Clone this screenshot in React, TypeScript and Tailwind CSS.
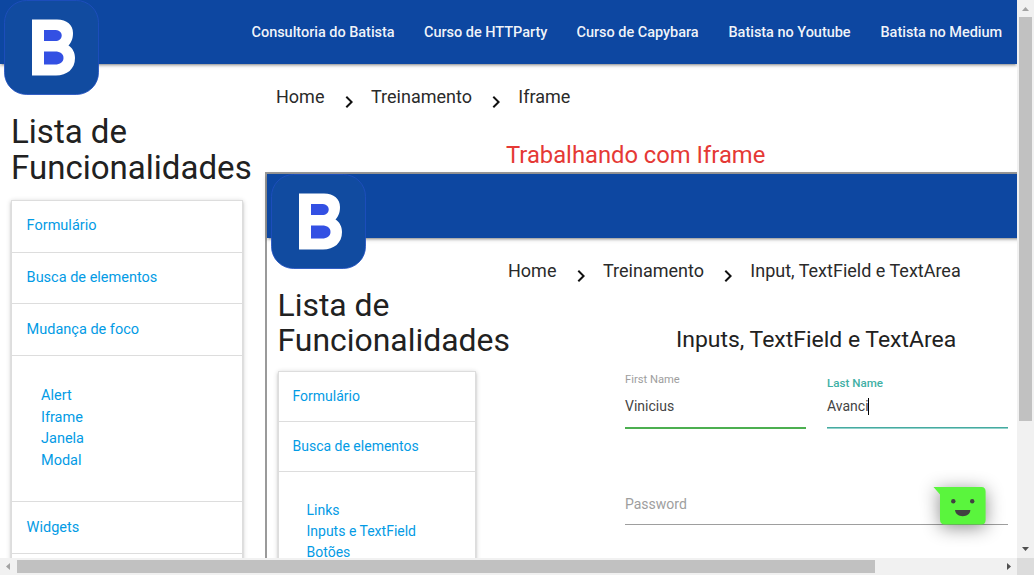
import type { ReactNode } from "react";

function Logo() {
  return (
    <svg className="relative z-10 ml-1 block shrink-0" width="96" height="96" viewBox="0 0 96 96">
      <rect x="0.5" y="0.5" width="94" height="94" rx="22" fill="#114ba0" stroke="#214fc2" strokeWidth="0.8" />
      <path
        d="M28 19.5H53C63 19.5 69 25 69 33C69 39 67 43 64.5 45.5C68.5 48 71 52.500 71 58C71 69 63 75.500 52 75.500H28Z"
        fill="#fff"
      />
      <path d="M40 30H50C55 30 57.700 32 57.700 35.500C57.700 39 55 41 51 41H40Z" fill="#3350e3" />
      <path d="M40 51.500H51C56.500 51.500 59.500 54 59.500 58C59.500 62 56 64.500 51 64.500H40Z" fill="#3350e3" />
    </svg>
  );
}

function Chevron() {
  return (
    <svg className="block shrink-0" width="24" height="24" viewBox="0 0 24 24" fill="#111">
      <path d="M10 6L8.590 7.410 13.170 12l-4.580 4.590L10 18l6-6z" />
    </svg>
  );
}

function Crumbs({ last }: { last: string }) {
  return (
    <nav className="flex h-6 text-[18px] leading-6 whitespace-nowrap text-[#2a2a2a]">
      <span className="w-[60.500px]">Home</span>
      <span className="w-[34.500px] pt-[5px]"><Chevron /></span>
      <span className="w-[112.500px]">Treinamento</span>
      <span className="w-[34.800px] pt-[5px]"><Chevron /></span>
      <span>{last}</span>
    </nav>
  );
}

function Header({ children }: { children?: ReactNode }) {
  return (
    <header className="relative z-10 flex h-16 shrink-0 items-start justify-between bg-[#0d47a1] shadow-[0_2px_2px_0_rgba(0,0,0,0.14),0_3px_1px_-2px_rgba(0,0,0,0.12),0_1px_5px_0_rgba(0,0,0,0.2)]">
      <Logo />
      {children}
    </header>
  );
}

const card =
  "overflow-hidden border border-[#ddd] bg-white text-[#039be5] shadow-[0_2px_2px_0_rgba(0,0,0,0.14),0_3px_1px_-2px_rgba(0,0,0,0.12),0_1px_5px_0_rgba(0,0,0,0.2)]";

function OuterMenu() {
  return (
    <aside className="w-[265px] shrink-0 pt-[50px] pl-[11px]">
      <h1 className="h-[73px] text-[33.060px] leading-[36.360px] whitespace-nowrap">Lista de<br />Funcionalidades</h1>
      <ul className={`${card} mt-[13px] w-[232px] text-[14.500px]`}>
        <li className="h-[52px] border-b border-[#ddd] pl-[14.600px] leading-[49px]">Formulário</li>
        <li className="h-[51px] border-b border-[#ddd] pl-[14.600px] leading-[49px]">Busca de elementos</li>
        <li className="h-[52px] border-b border-[#ddd] pl-[14.600px] leading-[52px]">Mudança de foco</li>
        <li className="h-[146px] border-b border-[#ddd] pt-[28.900px] pl-[29px] leading-[21.750px]">
          Alert<br />Iframe<br />Janela<br />Modal
        </li>
        <li className="h-[52px] border-b border-[#ddd] pl-[14.600px] leading-[52px]">Widgets</li>
        <li className="h-[52px]" />
      </ul>
    </aside>
  );
}

function InnerMenu() {
  return (
    <aside className="w-[241px] shrink-0 pt-[50px] pl-[11px]">
      <h1 className="-ml-[0.500px] h-[71px] text-[31.920px] leading-[35.110px] whitespace-nowrap">Lista de<br />Funcionalidades</h1>
      <ul className={`${card} mt-[12px] w-[198px] text-[14px]`}>
        <li className="h-[50px] border-b border-[#ddd] pl-[13.500px] leading-[49px]">Formulário</li>
        <li className="h-[50px] border-b border-[#ddd] pl-[13.500px] leading-[49px]">Busca de elementos</li>
        <li className="h-[240px] pt-[28px] pl-[27.500px] leading-[21px]">
          Links<br />Inputs e TextField<br />Botões
        </li>
      </ul>
    </aside>
  );
}

function Form() {
  return (
    <form className="mt-[18px] ml-[117px] w-[383px] text-[14px] text-[#444]">
      <div className="flex gap-[21px]">
        <label className="flex h-[58px] w-[181px] flex-col border-b-2 border-[#4caf50]">
          <span className="text-[11.200px] leading-[17px] text-[#9e9e9e]">First Name</span>
          <span className="mt-[8px] leading-[20px]">Vinicius</span>
        </label>
        <label className="flex h-[57px] w-[181px] flex-col border-b border-[#46aaa0] pt-1 shadow-[0_1px_0_0_#92d2cc]">
          <span className="text-[11.600px] leading-[17px] font-medium text-[#3fb0a5]">Last Name</span>
          <span className="mt-[4px] flex leading-[20px]">
            Avanci<i className="mt-[2px] -ml-[0.500px] h-[17px] w-px bg-black" />
          </span>
        </label>
      </div>
      <div className="mt-[64px] h-[32px] border-b border-[#9e9e9e] leading-[22px] text-[#9e9e9e]">Password</div>
    </form>
  );
}

function Frame() {
  return (
    <section className="flex h-[500px] w-[1000px] shrink-0 flex-col border-2 border-[#9a9a9a] bg-white">
      <Header />
      <div className="flex">
        <InnerMenu />
        <div className="pt-[21px]">
          <Crumbs last="Input, TextField e TextArea" />
          <h2 className="mt-[44px] ml-[168px] h-[26px] text-[22.960px] leading-[26px] whitespace-nowrap">Inputs, TextField e TextArea</h2>
          <Form />
        </div>
      </div>
    </section>
  );
}

function ChatButton() {
  return (
    <svg className="absolute top-[457px] left-[903px]" width="120" height="101" viewBox="903 457 120 101">
      <path
        className="[filter:drop-shadow(0_3px_9px_rgba(0,0,0,0.45))]"
        d="M933.500 487H981.500Q985.600 487 985.600 491.500V520Q985.600 524.500 981 524.500H945Q940 524.500 940 519.500V494.500Z"
        fill="#5af53d"
      />
      <circle cx="953.300" cy="501.300" r="2.200" fill="#414141" />
      <circle cx="972.200" cy="501.300" r="2.200" fill="#414141" />
      <path d="M955 510H970.400C970 514 967 516.200 962.700 516.200S955.500 514 955 510Z" fill="#414141" />
    </svg>
  );
}

const links = [
  ["Consultoria do Batista", "w-[172.500px]"],
  ["Curso de HTTParty", "w-[152.500px]"],
  ["Curso de Capybara", "w-[152px]"],
  ["Batista no Youtube", "w-[152px]"],
  ["Batista no Medium", "w-[136.500px]"],
];

export default function App() {
  return (
    <div className="grid h-[575px] w-[1034px] grid-cols-[1017px_17px] grid-rows-[558px_17px] overflow-hidden bg-white font-['Roboto',sans-serif] text-[#212121]">
      <main className="relative flex flex-col overflow-hidden">
        <Header>
          <nav className="flex text-[14.500px] leading-[66px] font-medium tracking-[-0.030px] whitespace-nowrap text-white/95">
            {links.map(([text, width]) => (
              <a key={text} className={width}>{text}</a>
            ))}
          </nav>
        </Header>
        <div className="flex">
          <OuterMenu />
          <div className="flex flex-col pt-[21px]">
            <div className="pl-[11px]"><Crumbs last="Iframe" /></div>
            <h2 className="mt-[33px] mb-[4px] ml-[241px] h-[26px] text-[23.780px] leading-[26px] whitespace-nowrap text-[#e53935]">Trabalhando com Iframe</h2>
            <Frame />
          </div>
        </div>
        <ChatButton />
      </main>
      <div className="flex flex-col items-center bg-[#f1f1f1]">
        <svg width="17" height="17" viewBox="0 0 17 17"><path d="M5 11H12L8.500 7Z" fill="#a3a3a3" /></svg>
        <div className="h-[404px] w-[13px] bg-[#c1c1c1]" />
        <svg className="mt-auto" width="17" height="17" viewBox="0 0 17 17"><path d="M5 6H12L8.500 10Z" fill="#505050" /></svg>
      </div>
      <div className="flex items-center bg-[#f1f1f1]">
        <svg width="17" height="17" viewBox="0 0 17 17"><path d="M10 5V12L6 8.500Z" fill="#a3a3a3" /></svg>
        <div className="h-[13px] w-[858px] bg-[#c1c1c1]" />
        <svg className="ml-auto" width="17" height="17" viewBox="0 0 17 17"><path d="M7 5V12L11 8.500Z" fill="#505050" /></svg>
      </div>
      <div className="bg-[#dcdcdc]" />
    </div>
  );
}
